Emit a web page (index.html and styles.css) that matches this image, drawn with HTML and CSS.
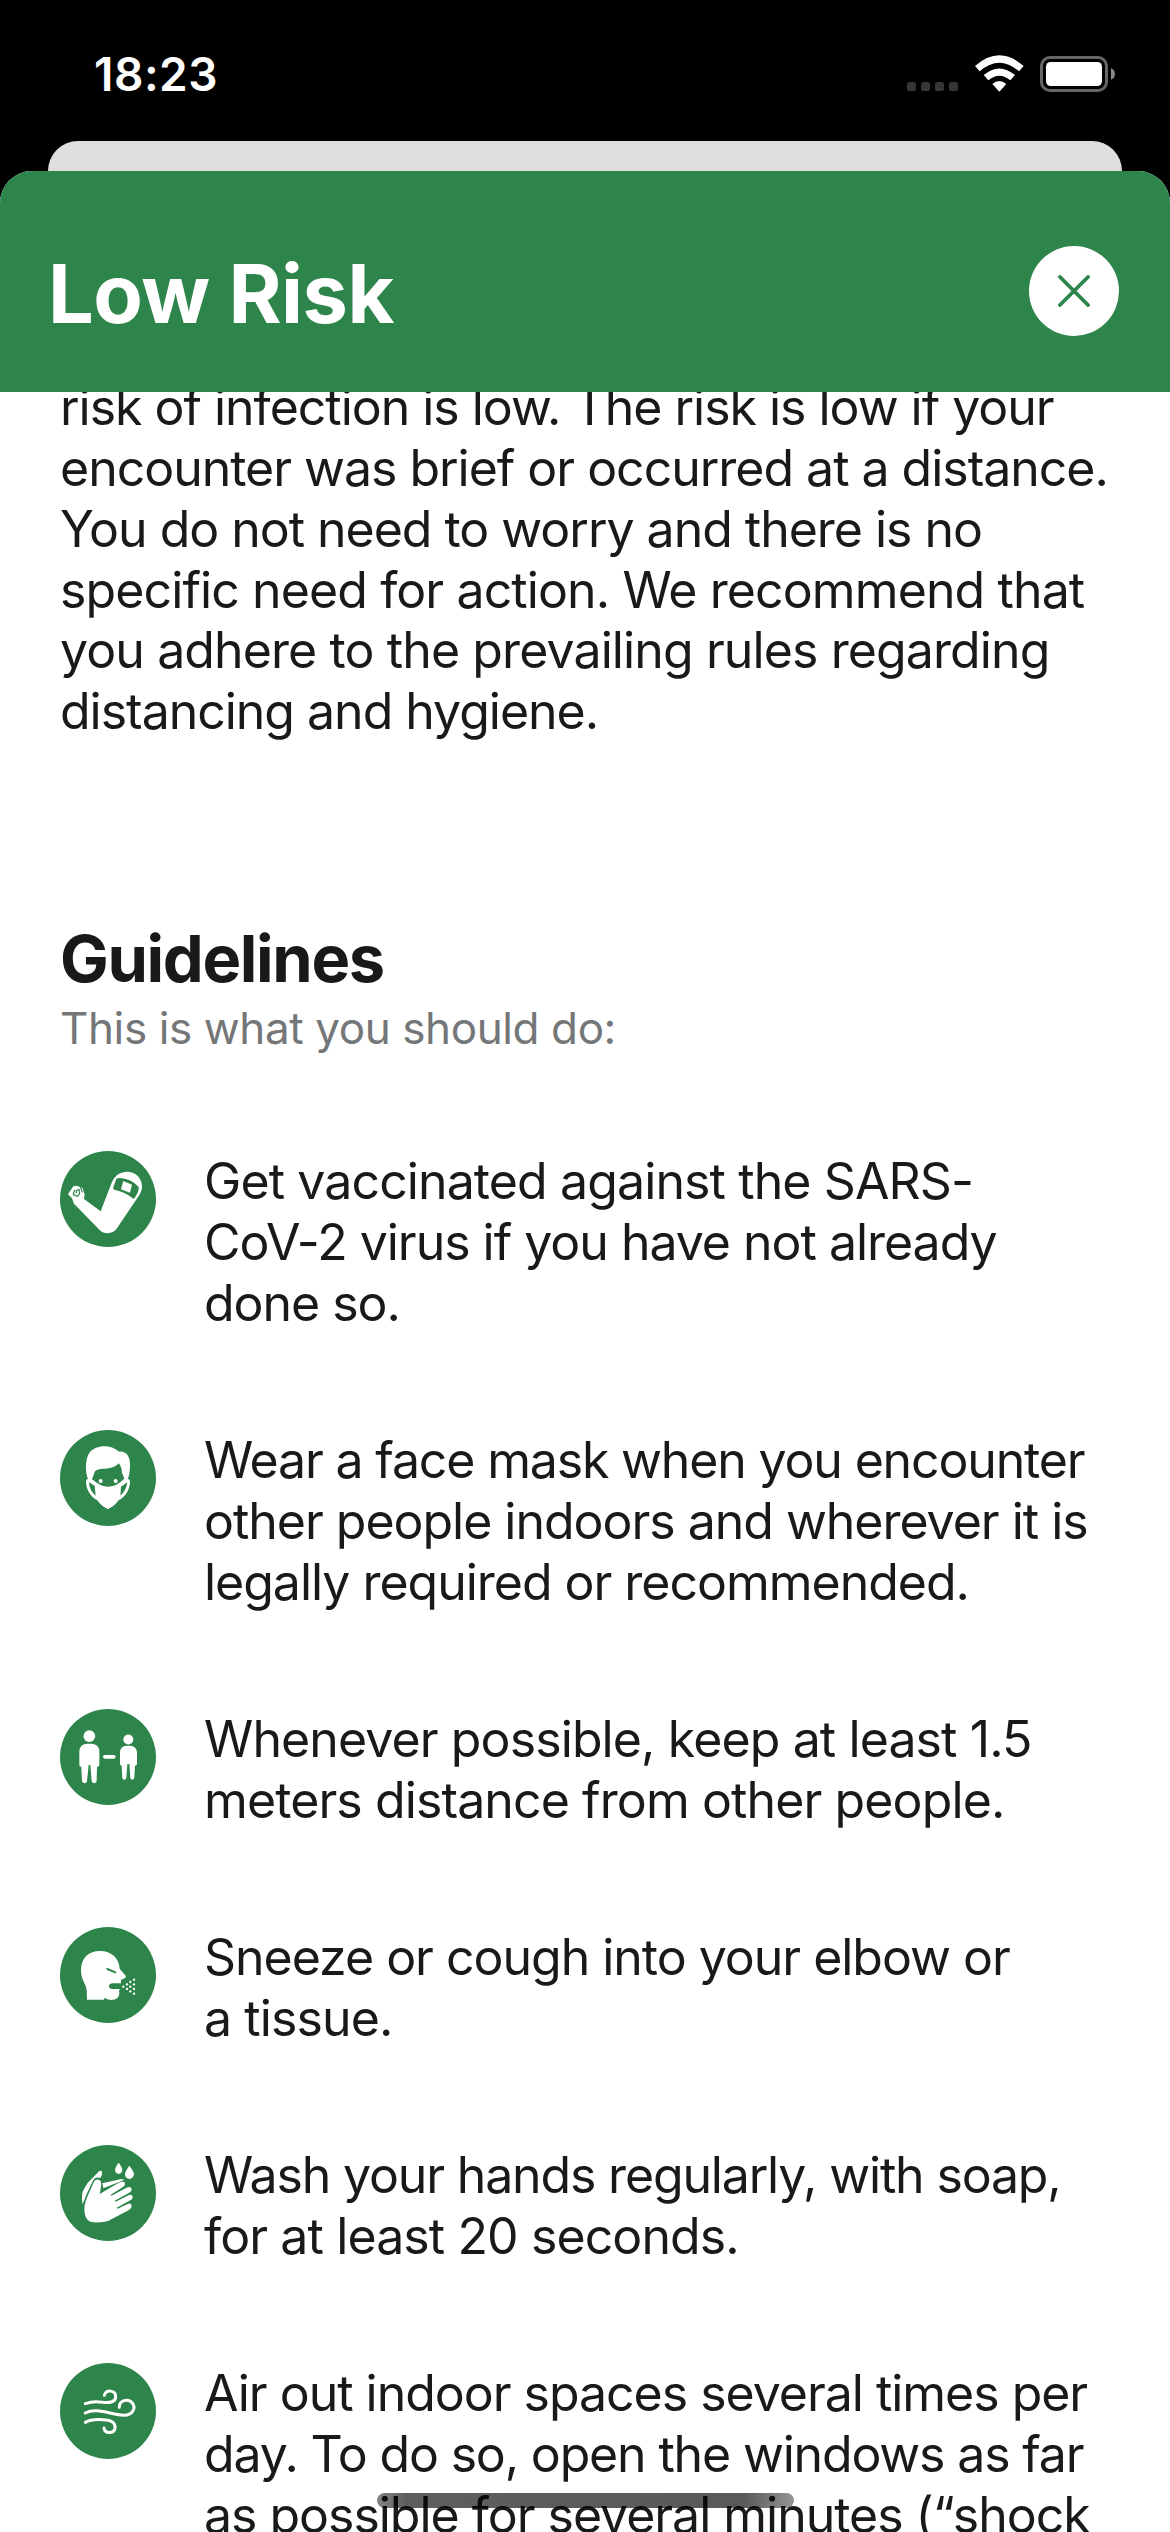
FILE: index.html
```html
<!DOCTYPE html>
<html lang="en">
<head>
<meta charset="utf-8">
<title>Low Risk</title>
<link rel="stylesheet" href="styles.css">
</head>
<body>
<div class="phone">
  <div class="status">
    <span class="time">18:23</span>
    <div class="status-icons">
      <svg class="signal" viewBox="0 0 51 9" aria-hidden="true"><g fill="#353736"><rect width="9" height="9" rx="2.6"/><rect x="14" width="9" height="9" rx="2.6"/><rect x="28" width="9" height="9" rx="2.6"/><rect x="42" width="9" height="9" rx="2.6"/></g></svg>
      <svg class="wifi" viewBox="284 44 147 110" aria-hidden="true"><g fill="none" stroke="#fff" stroke-width="21"><path d="M291 85Q357 27 423 85"/><path d="M317 112Q357 78 397 112"/></g><path fill="#fff" d="M336 131Q357 113 378 131L357 154Z"/></svg>
      <svg class="battery" viewBox="480 48 226 108" aria-hidden="true"><rect x="484.500" y="52.500" width="195" height="99" rx="25" fill="none" stroke="#666" stroke-width="9"/><rect x="498" y="66" width="168" height="72" rx="14" fill="#fff"/><path fill="#888" d="M693 84Q705 90 705 102T693 119Z"/></svg>
    </div>
  </div>
  <div class="behind"></div>
  <main class="sheet">
    <header class="header">
      <h1>Low Risk</h1>
      <button class="close" aria-label="Close"><svg viewBox="0 0 32 32"><path d="M2 2L30 30M30 2L2 30" fill="none" stroke="#2e854b" stroke-width="3.800" stroke-linecap="round"/></svg></button>
    </header>
    <div class="content">
      <p class="intro">risk of infection is low. The risk is low if your<br>encounter was brief or occurred at a distance.<br>You do not need to worry and there is no<br><span class="loose">specific need for action. We recommend that<br>you adhere to the prevailing rules regarding</span><br>distancing and hygiene.</p>
      <h2>Guidelines</h2>
      <p class="subtitle">This is what you should do:</p>
      <ul class="list">
        <li>
          <svg class="icon" viewBox="30 32 288 288"><path fill="#fff" d="M54 162L70 138Q79 134 87 139L97 142L104 163L102 176L152 213L186 125C195 104 211 94 233 94C260 96 278 116 276 144Q274 155 268 164L201 264C191 281 163 284 149 269L72 190L66 174Z"/><path d="M74 149L70 163L83 168L89 160L87 147L79 151L79 159M91 139L97 156" fill="none" stroke="#2e854b" stroke-width="3.500"/><path fill="#2e854b" d="M199 115Q203 113 211 113Q246 116 266 140Q268 145 263 157L254 173Q250 177 246 172Q226 155 193 148Q188 147 190 141Z"/><path fill="#fff" d="M220 122L246 133L240 157L213 147Z"/></svg>
          <p><span class="loose">Get vaccinated against the SARS-</span><br>CoV-2 virus if you have not already<br>done so.</p>
        </li>
        <li>
          <svg class="icon" viewBox="30 36 288 288"><path fill="#fff" d="M114 183C105 162 105 120 120 102C136 82 180 76 207 101C232 99 242 120 240 147C239 164 237 176 233 183Q241 184 240 194C238 219 224 237 206 247Q192 266 174 273Q155 266 142 247C124 237 110 218 108 194Q107 184 114 183Z"/><path fill="#2e854b" d="M126 184L135 160Q143 151 165 152Q196 151 206 136Q215 146 216 164L223 182Q176 229 126 184Z"/><path fill="#fff" d="M126 184Q150 209 175 208Q202 207 223 184L210 202L206 244L174 273L142 244L138 203Z"/><circle cx="152" cy="189" r="6" fill="#fff"/><circle cx="197" cy="189" r="6" fill="#fff"/><path d="M117 193Q118 218 137 233L134 203ZM232 193Q228 220 211 233L213 206Z" fill="#2e854b"/></svg>
          <p><span class="tight">Wear a face mask when you encounter</span><br>other people indoors and wherever it is<br>legally required or recommended.</p>
        </li>
        <li>
          <svg class="icon" viewBox="30 36 288 288"><g fill="#fff"><circle cx="118" cy="117.500" r="17.500"/><path d="M111 140H125Q148 141 148 165V204Q148 210 141 209L140 253Q138 259 132 259Q126 258 125 253L121 204H116L111 253Q110 259 104 259Q97 258 96 253L94 209Q88 210 88 203V165Q88 141 111 140Z"/><circle cx="235" cy="127.500" r="15"/><path d="M230 146H240Q260 147 261 167V200Q261 206 255 206L253 243Q251 248 247 248Q242 248 241 243L238 201H232L229 243Q228 248 223 248Q218 248 217 243L215 206Q210 206 210 200V167Q210 147 230 146Z"/><rect x="159" y="174" width="38" height="11" rx="5.500"/></g></svg>
          <p><span class="loose">Whenever possible, keep at least 1.5<br>meters distance from other people.</span></p>
        </li>
        <li>
          <svg class="icon" viewBox="30 39 288 288"><path fill="#fff" d="M111 257L110 228C108 207 93 200 93 168C94 130 116 111 150 111C185 111 208 134 209 164L227 185Q230 190 221 194L213 197V208H188Q177 209 177 217T188 225H210Q205 231 208 237Q208 257 184 258Q173 258 164 251L162 257Z"/><path d="M172 165L196 175" stroke="#2e854b" stroke-width="6" stroke-linecap="round"/><g fill="#fff"><circle cx="220" cy="218" r="3.500"/><circle cx="231" cy="211" r="3.500"/><circle cx="231" cy="225" r="3.500"/><circle cx="241" cy="204" r="3.500"/><circle cx="241" cy="218" r="3.500"/><circle cx="241" cy="232" r="3.500"/><circle cx="252" cy="197" r="3.500"/><circle cx="252" cy="211" r="3.500"/><circle cx="252" cy="225" r="3.500"/><circle cx="252" cy="239" r="3.500"/></g></svg>
          <p>Sneeze or cough into your elbow or<br><span class="loose">a&nbsp;tissue.</span></p>
        </li>
        <li>
          <svg class="icon" viewBox="30 39 288 288"><g fill="#fff"><path d="M206 92Q217 106 217 114Q216 125 206 126Q196 125 195 114Q195 106 206 92ZM238 101Q252 119 252 127Q250 140 238 141Q226 140 225 127Q225 119 238 101Z"/><path d="M98 217Q94 199 97 182Q101 171 113 153L145 120Q152 113 156 119Q158 129 151 138Q137 134 130 144L111 184ZM157 154L211 142Q219 141 224 143L160 169Z"/><path d="M132 149C137 140 150 140 153 151Q155 160 149 186L209 151Q221 146 225 153Q227 160 219 165L182 188L184 191L233 166Q242 163 245 171Q246 178 238 182L194 206L197 209L237 189Q246 187 248 194Q249 201 241 205L200 227L203 230L235 215Q244 213 245 222Q245 229 237 234L174 267Q151 274 123 270C107 264 101 246 104 219Q106 208 113 192Z"/></g></svg>
          <p><span class="tight">Wash your hands regularly, with soap,</span><br><span class="loose">for at least 20 seconds.</span></p>
        </li>
        <li>
          <svg class="icon" viewBox="30 39 288 288"><g fill="none" stroke="#fff" stroke-width="9" stroke-linecap="round"><path d="M106 161C125 154 141 154 158 157C180 160 197 155 197 140C197 120 169 117 163 136"/><path d="M106 189C140 171 184 195 222 196C250 195 258 173 247 159C234 144 207 151 208 172"/><path d="M106 217C123 207 148 208 169 210C188 211 197 223 195 235C191 253 164 251 162 234"/></g></svg>
          <p>Air out indoor spaces several times per<br><span class="tight">day. To do so, open the windows as far</span><br>as possible for several minutes (“shock</p>
        </li>
      </ul>
    </div>
  </main>
  <div class="home-bar"></div>
</div>
</body>
</html>
```
FILE: styles.css
```css
* { box-sizing: border-box; margin: 0; padding: 0; }
body { background: #000; }
.phone {
  position: relative;
  display: flex;
  flex-direction: column;
  width: 1170px;
  height: 2532px;
  overflow: hidden;
  background: #000;
  color: #17191a;
  font-family: Inter, "Liberation Sans", sans-serif;
}
.status {
  display: flex;
  justify-content: space-between;
  flex: none;
  height: 141px;
  padding: 47px 55px 0 94px;
}
.time { color: #fff; font-size: 46px; font-weight: 600; line-height: 55px; letter-spacing: 0.5px; }
.status-icons { display: flex; align-items: flex-start; }
.signal { width: 51px; height: 9px; margin: 35px 17px 0 0; }
.wifi { width: 49px; height: 36.7px; margin: 8px 16px 0 0; }
.battery { width: 75.3px; height: 36px; margin-top: 9px; }
.behind {
  flex: none;
  height: 60px;
  margin: 0 48px -30px;
  border-radius: 30px 30px 0 0;
  background: #e0dfe0;
}
.sheet {
  position: relative;
  display: flex;
  flex-direction: column;
  flex: 1;
  min-height: 0;
  overflow: hidden;
  border-radius: 32px 32px 0 0;
  background: #fff;
}
.header {
  display: flex;
  justify-content: space-between;
  align-items: flex-start;
  flex: none;
  height: 221px;
  padding: 75px 51px 0 48px;
  background: #2e854b;
}
h1 { margin-top: -1px; color: #fff; font-size: 81px; font-weight: 700; line-height: 98px; letter-spacing: -0.5px; }
.close {
  display: grid;
  place-items: center;
  width: 90px;
  height: 90px;
  border: 0;
  border-radius: 50%;
  background: #fff;
}
.close svg { width: 32px; height: 32px; }
.content { flex: 1; min-height: 0; overflow: hidden; padding: 0 60px; }
.content p { font-size: 50px; line-height: 60.86px; letter-spacing: -1.02px; white-space: nowrap; }
.content .loose { letter-spacing: -0.89px; }
.content .tight { letter-spacing: -1.16px; }
.content .intro { margin-top: -15px; }
h2 { margin-top: 177px; font-size: 65px; font-weight: 700; line-height: 79px; letter-spacing: -1.35px; }
.content .subtitle { margin-top: 2.5px; color: #747677; font-size: 44px; line-height: 54px; letter-spacing: -0.4px; }
.list { display: flex; flex-direction: column; gap: 96.35px; margin-top: 96.34px; list-style: none; }
.list li { display: flex; align-items: flex-start; gap: 48px; }
.icon { flex: none; width: 96px; height: 96px; border-radius: 50%; background: #2e854b; }
.home-bar {
  position: absolute;
  left: 377px;
  bottom: 24px;
  width: 417px;
  height: 15px;
  border-radius: 8px;
  background: linear-gradient(90deg, rgba(0,0,0,.48), rgba(0,0,0,.63) 7%, rgba(0,0,0,.65) 88%, rgba(0,0,0,.42));
}
```
